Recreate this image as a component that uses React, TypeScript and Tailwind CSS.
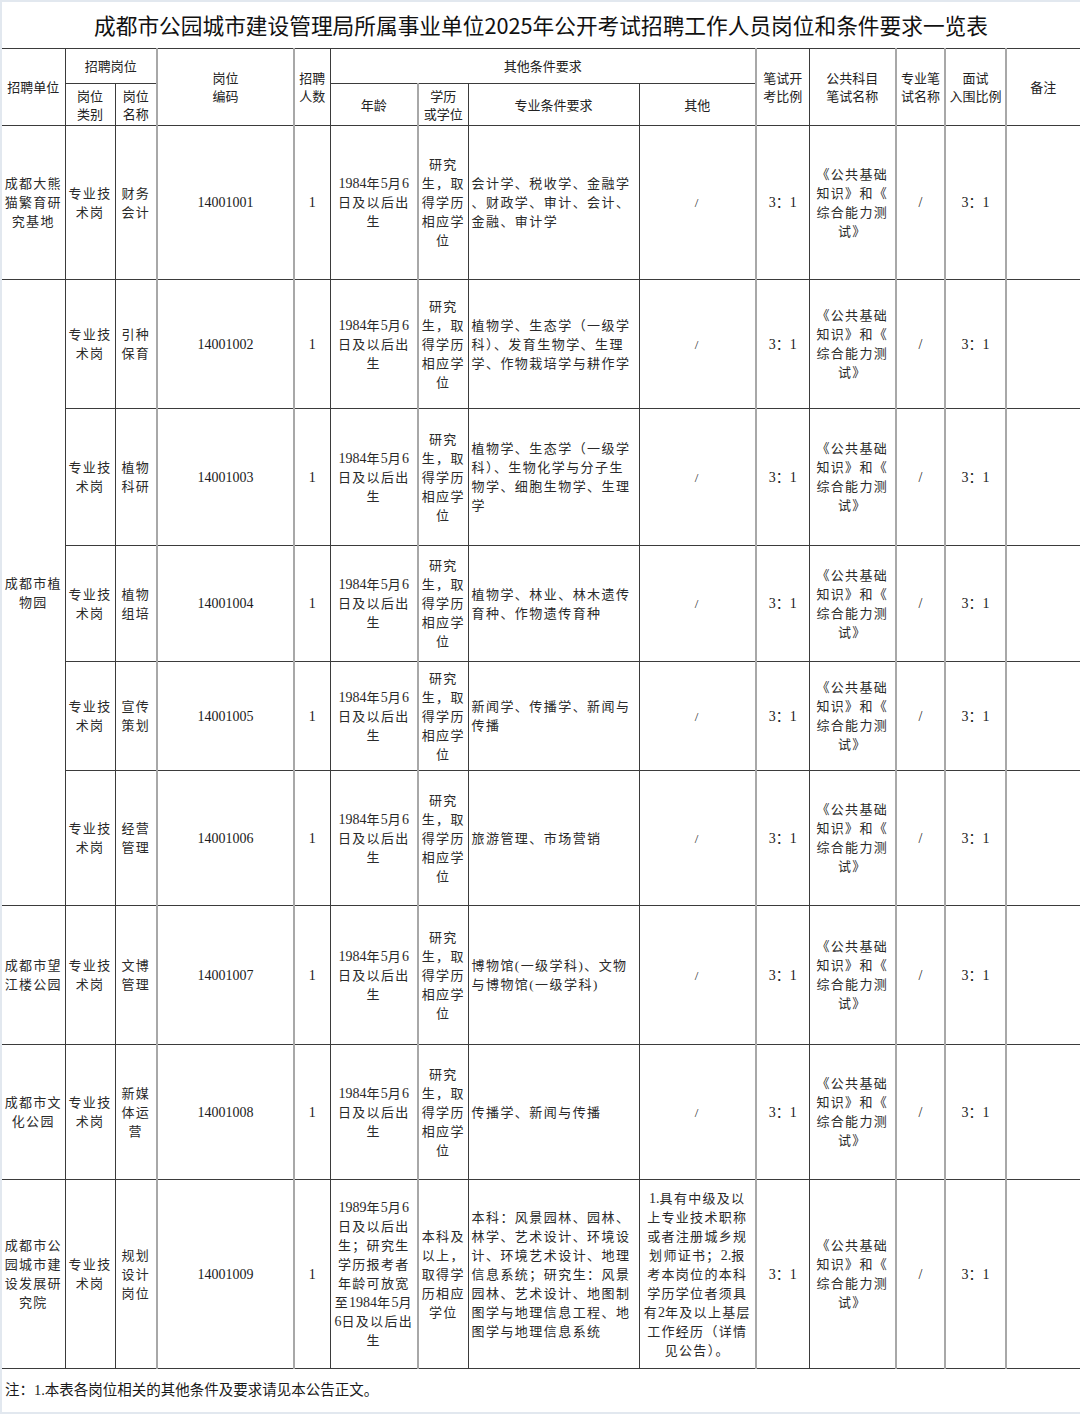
import React from "react";

type Row = {
  h: string;
  unit?: string[];
  unitSpan?: number;
  type: string[];
  name: string[];
  code: string;
  age: string[];
  edu: string[];
  major: string[];
  other: string[];
};

const age84 = ["1984年5月6", "日及以后出", "生"];
const edu = ["研究", "生，取", "得学历", "相应学", "位"];

const rows: Row[] = [
  {
    h: "h-[154px]",
    unit: ["成都大熊", "猫繁育研", "究基地"],
    type: ["专业技", "术岗"],
    name: ["财务", "会计"],
    code: "14001001",
    age: age84,
    edu,
    major: ["会计学、税收学、金融学", "、财政学、审计、会计、", "金融、审计学"],
    other: ["/"],
  },
  {
    h: "h-[129px]",
    unit: ["成都市植", "物园"],
    unitSpan: 5,
    type: ["专业技", "术岗"],
    name: ["引种", "保育"],
    code: "14001002",
    age: age84,
    edu,
    major: ["植物学、生态学（一级学", "科）、发育生物学、生理", "学、作物栽培学与耕作学"],
    other: ["/"],
  },
  {
    h: "h-[137px]",
    type: ["专业技", "术岗"],
    name: ["植物", "科研"],
    code: "14001003",
    age: age84,
    edu,
    major: ["植物学、生态学（一级学", "科）、生物化学与分子生", "物学、细胞生物学、生理", "学"],
    other: ["/"],
  },
  {
    h: "h-[116px]",
    type: ["专业技", "术岗"],
    name: ["植物", "组培"],
    code: "14001004",
    age: age84,
    edu,
    major: ["植物学、林业、林木遗传", "育种、作物遗传育种"],
    other: ["/"],
  },
  {
    h: "h-[109px]",
    type: ["专业技", "术岗"],
    name: ["宣传", "策划"],
    code: "14001005",
    age: age84,
    edu,
    major: ["新闻学、传播学、新闻与", "传播"],
    other: ["/"],
  },
  {
    h: "h-[135px]",
    type: ["专业技", "术岗"],
    name: ["经营", "管理"],
    code: "14001006",
    age: age84,
    edu,
    major: ["旅游管理、市场营销"],
    other: ["/"],
  },
  {
    h: "h-[139px]",
    unit: ["成都市望", "江楼公园"],
    type: ["专业技", "术岗"],
    name: ["文博", "管理"],
    code: "14001007",
    age: age84,
    edu,
    major: ["博物馆(一级学科)、文物", "与博物馆(一级学科)"],
    other: ["/"],
  },
  {
    h: "h-[135px]",
    unit: ["成都市文", "化公园"],
    type: ["专业技", "术岗"],
    name: ["新媒", "体运", "营"],
    code: "14001008",
    age: age84,
    edu,
    major: ["传播学、新闻与传播"],
    other: ["/"],
  },
  {
    h: "h-[189px]",
    unit: ["成都市公", "园城市建", "设发展研", "究院"],
    type: ["专业技", "术岗"],
    name: ["规划", "设计", "岗位"],
    code: "14001009",
    age: [
      "1989年5月6",
      "日及以后出",
      "生；研究生",
      "学历报考者",
      "年龄可放宽",
      "至1984年5月",
      "6日及以后出",
      "生",
    ],
    edu: ["本科及", "以上，", "取得学", "历相应", "学位"],
    major: [
      "本科：风景园林、园林、",
      "林学、艺术设计、环境设",
      "计、环境艺术设计、地理",
      "信息系统；研究生：风景",
      "园林、艺术设计、地图制",
      "图学与地理信息工程、地",
      "图学与地理信息系统",
    ],
    other: [
      "1.具有中级及以",
      "上专业技术职称",
      "或者注册城乡规",
      "划师证书；2.报",
      "考本岗位的本科",
      "学历学位者须具",
      "有2年及以上基层",
      "工作经历（详情",
      "见公告）。",
    ],
  },
];

const pub = ["《公共基础", "知识》和《", "综合能力测", "试》"];

const serif = "font-['Liberation_Serif','Noto_Sans_CJK_SC',serif]";
const sans = "font-['Noto_Sans_CJK_SC',sans-serif]";

const B = "border border-[#3b3b3b]";
const G = "border-l-2 border-l-[#a8a8a8]";

function Txt({ s }: { s: string }) {
  const parts = s.split(/([0-9.]+)/);
  return (
    <>
      {parts.map((p, i) =>
        /^[0-9.]+$/.test(p) ? (
          <span key={i} className="tracking-normal text-[14px]">
            {p}
          </span>
        ) : (
          <React.Fragment key={i}>{p}</React.Fragment>
        )
      )}
    </>
  );
}

function Lines({ lines }: { lines: string[] }) {
  return (
    <>
      {lines.map((l, i) => (
        <div key={i} className="whitespace-nowrap">
          <Txt s={l} />
        </div>
      ))}
    </>
  );
}

const td = `${B} align-middle text-center p-0`;
const body = `${serif} text-[13px] leading-[19px] tracking-[1.3px] text-[#2a2a2a]`;
const num = `${serif} text-[14px] text-[#1a1a1a]`;
const th = `${B} align-middle text-center p-0 ${sans} text-[13px] leading-[18px] text-[#222] font-normal`;

export default function App() {
  return (
    <div className="w-[1080px] h-[1414px] bg-white border-l-2 border-t-2 border-b-2 border-[#e2e8ef] overflow-hidden">
      <div
        className={`h-[46px] flex items-center justify-center ${sans} text-[21.7px] text-[#111] whitespace-nowrap`}
      >
        成都市公园城市建设管理局所属事业单位2025年公开考试招聘工作人员岗位和条件要求一览表
      </div>
      <table className="table-fixed border-collapse w-[1078px]">
        <colgroup>
          <col className="w-[63px]" />
          <col className="w-[50px]" />
          <col className="w-[42px]" />
          <col className="w-[137px]" />
          <col className="w-[36px]" />
          <col className="w-[88px]" />
          <col className="w-[50px]" />
          <col className="w-[171px]" />
          <col className="w-[117px]" />
          <col className="w-[53px]" />
          <col className="w-[87px]" />
          <col className="w-[49px]" />
          <col className="w-[61px]" />
          <col className="w-[74px]" />
        </colgroup>
        <thead>
          <tr className="h-[35px]">
            <th rowSpan={2} className={`${th} border-l-0`}>
              招聘单位
            </th>
            <th colSpan={2} className={th}>
              招聘岗位
            </th>
            <th rowSpan={2} className={`${th} ${G}`}>
              <Lines lines={["岗位", "编码"]} />
            </th>
            <th rowSpan={2} className={`${th} ${G}`}>
              <Lines lines={["招聘", "人数"]} />
            </th>
            <th colSpan={4} className={th}>
              其他条件要求
            </th>
            <th rowSpan={2} className={`${th} ${G}`}>
              <Lines lines={["笔试开", "考比例"]} />
            </th>
            <th rowSpan={2} className={th}>
              <Lines lines={["公共科目", "笔试名称"]} />
            </th>
            <th rowSpan={2} className={`${th} ${G}`}>
              <Lines lines={["专业笔", "试名称"]} />
            </th>
            <th rowSpan={2} className={`${th} ${G}`}>
              <Lines lines={["面试", "入围比例"]} />
            </th>
            <th rowSpan={2} className={`${th} ${G}`}>
              备注
            </th>
          </tr>
          <tr className="h-[42px]">
            <th className={`${th} leading-[17px]`}>
              <Lines lines={["岗位", "类别"]} />
            </th>
            <th className={`${th} leading-[17px]`}>
              <Lines lines={["岗位", "名称"]} />
            </th>
            <th className={th}>年龄</th>
            <th className={`${th} ${G} leading-[17px]`}>
              <Lines lines={["学历", "或学位"]} />
            </th>
            <th className={th}>专业条件要求</th>
            <th className={th}>其他</th>
          </tr>
        </thead>
        <tbody>
          {rows.map((r) => (
            <tr key={r.code} className={r.h}>
              {r.unit && (
                <td rowSpan={r.unitSpan ?? 1} className={`${td} border-l-0 ${body}`}>
                  <Lines lines={r.unit} />
                </td>
              )}
              <td className={`${td} ${body}`}>
                <Lines lines={r.type} />
              </td>
              <td className={`${td} ${body}`}>
                <Lines lines={r.name} />
              </td>
              <td className={`${td} ${G} ${num}`}>{r.code}</td>
              <td className={`${td} ${G} ${num}`}>1</td>
              <td className={`${td} ${body}`}>
                <Lines lines={r.age} />
              </td>
              <td className={`${td} ${G} ${body}`}>
                <Lines lines={r.edu} />
              </td>
              <td className={`${B} align-middle text-left p-0 pl-[3px] ${body} tracking-[1.45px]`}>
                <Lines lines={r.major} />
              </td>
              <td className={`${td} ${body}`}>
                <Lines lines={r.other} />
              </td>
              <td className={`${td} ${G} ${num}`}>3：1</td>
              <td className={`${td} ${body}`}>
                <Lines lines={pub} />
              </td>
              <td className={`${td} ${G} ${num}`}>/</td>
              <td className={`${td} ${G} ${num}`}>3：1</td>
              <td className={`${td} ${G}`}></td>
            </tr>
          ))}
        </tbody>
      </table>
      <div className={`h-[44px] flex items-center pl-[3px] ${serif} text-[14.5px] text-[#1a1a1a] whitespace-nowrap`}>
        注：1.本表各岗位相关的其他条件及要求请见本公告正文。
      </div>
    </div>
  );
}
